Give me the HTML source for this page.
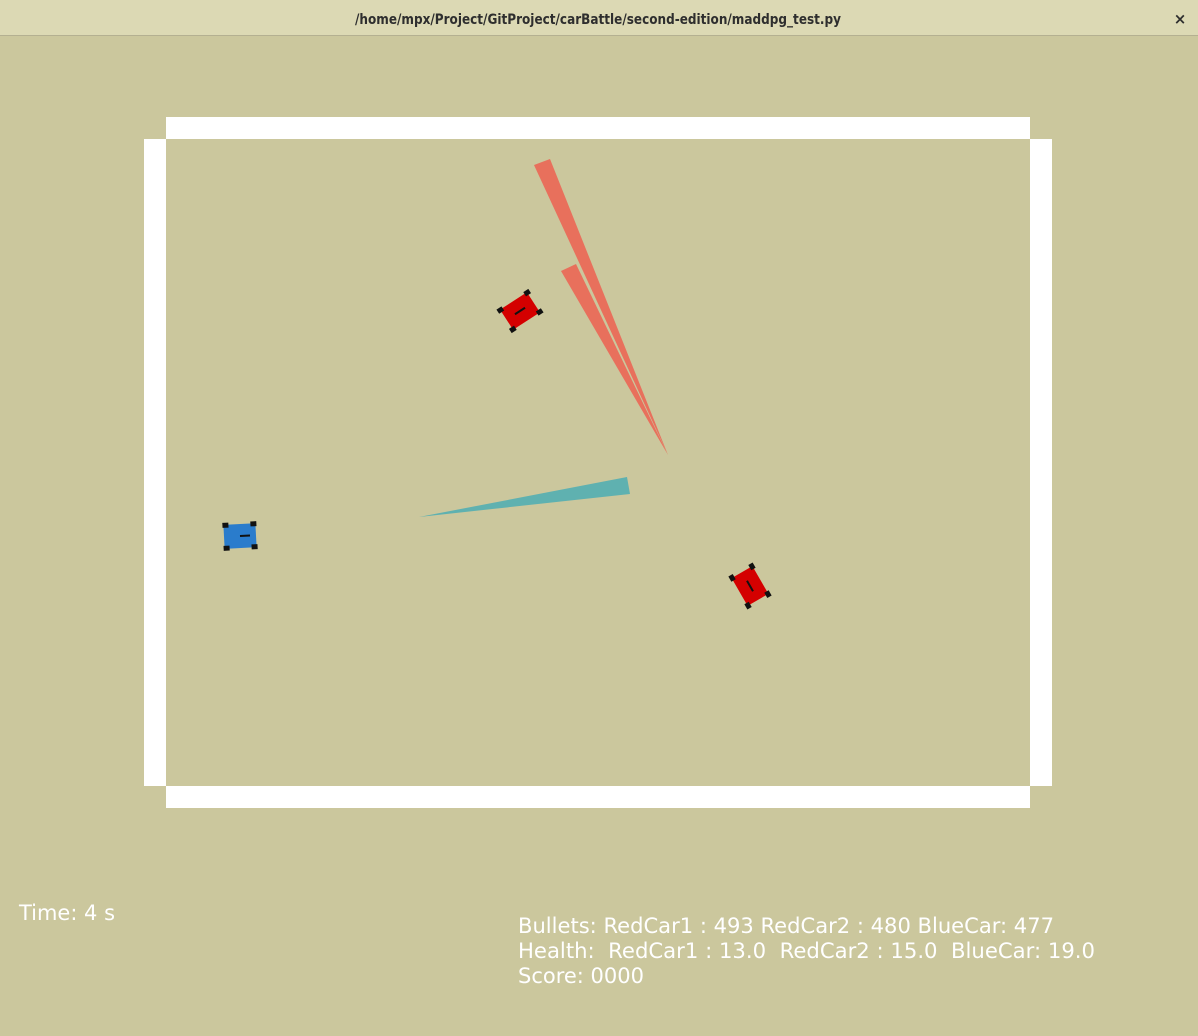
<!DOCTYPE html>
<html><head><meta charset="utf-8"><style>
html,body{margin:0;padding:0;width:1198px;height:1036px;overflow:hidden;background:#cbc79d;}
</style></head><body>
<svg width="1198" height="1036" xmlns="http://www.w3.org/2000/svg" style="display:block">
<rect x="0" y="0" width="1198" height="1036" fill="#cbc79d"/>
<rect x="0" y="0" width="1198" height="36" fill="#dcd9b4"/>
<rect x="0" y="35" width="1198" height="1" fill="#b4b091"/>
<text x="355" y="24" textLength="486" lengthAdjust="spacingAndGlyphs" font-family="DejaVu Sans, sans-serif" font-weight="bold" font-size="14" fill="#2e2e2e">/home/mpx/Project/GitProject/carBattle/second-edition/maddpg_test.py</text>
<text x="1180" y="24" text-anchor="middle" font-family="DejaVu Sans, sans-serif" font-weight="bold" font-size="15" fill="#2e2e2e">×</text>
<rect x="166" y="117" width="864" height="22" fill="#fff"/>
<rect x="166" y="786" width="864" height="22" fill="#fff"/>
<rect x="144" y="139" width="22" height="647" fill="#fff"/>
<rect x="1030" y="139" width="22" height="647" fill="#fff"/>
<polygon points="534,165 550,159 668,455" fill="#e8705c"/>
<polygon points="561,271 576,264 668,455" fill="#e8705c"/>
<polygon points="419,517 627,477 630,494" fill="#5fb1b0"/>
<g transform="translate(520,311) rotate(-33)">
<rect x="-16" y="-12" width="32" height="24" fill="#d40000"/>
<rect x="-19" y="-14" width="6" height="5" fill="#111"/><rect x="13" y="-14" width="6" height="5" fill="#111"/>
<rect x="-19" y="9" width="6" height="5" fill="#111"/><rect x="13" y="9" width="6" height="5" fill="#111"/>
<rect x="-6" y="-1" width="12" height="2" fill="#111"/>
</g>
<g transform="translate(750,586) rotate(-120)">
<rect x="-16" y="-12" width="32" height="24" fill="#d40000"/>
<rect x="-19" y="-14" width="6" height="5" fill="#111"/><rect x="13" y="-14" width="6" height="5" fill="#111"/>
<rect x="-19" y="9" width="6" height="5" fill="#111"/><rect x="13" y="9" width="6" height="5" fill="#111"/>
<rect x="-6" y="-1" width="12" height="2" fill="#111"/>
</g>
<g transform="translate(240,536) rotate(-3)">
<rect x="-16" y="-12" width="32" height="24" fill="#2a7ccc"/>
<rect x="-17" y="-14" width="6" height="5" fill="#111"/><rect x="11" y="-14" width="6" height="5" fill="#111"/>
<rect x="-17" y="9" width="6" height="5" fill="#111"/><rect x="11" y="9" width="6" height="5" fill="#111"/>
<rect x="0" y="-1" width="10" height="2" fill="#111"/>
</g>
<g font-family="DejaVu Sans, sans-serif" font-size="21" fill="#fff">
<text x="19" y="920" textLength="96" lengthAdjust="spacingAndGlyphs">Time: 4 s</text>
<text x="518" y="933" textLength="536" lengthAdjust="spacingAndGlyphs">Bullets: RedCar1 : 493 RedCar2 : 480 BlueCar: 477</text>
<text x="518" y="958" xml:space="preserve" textLength="577" lengthAdjust="spacingAndGlyphs">Health:  RedCar1 : 13.0  RedCar2 : 15.0  BlueCar: 19.0</text>
<text x="518" y="983" textLength="126" lengthAdjust="spacingAndGlyphs">Score: 0000</text>
</g>
</svg>
</body></html>
